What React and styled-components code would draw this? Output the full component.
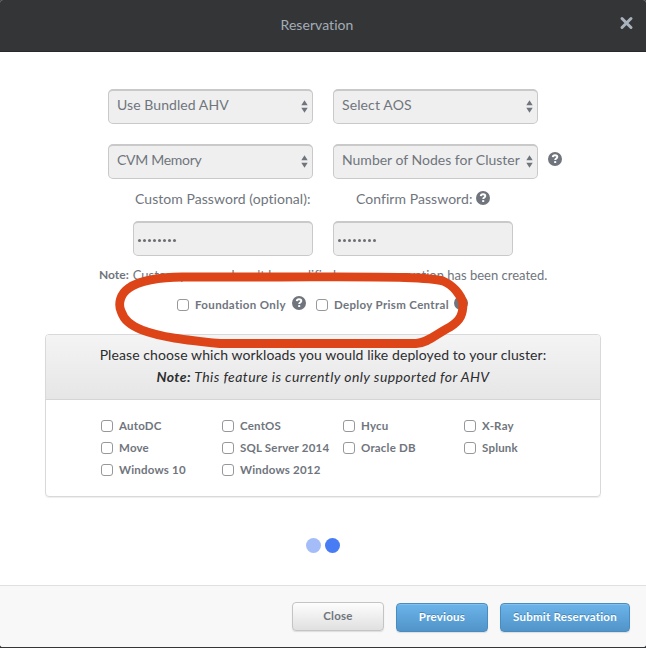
import React from 'react';
import styled, { createGlobalStyle } from 'styled-components';

const GlobalStyle = createGlobalStyle`
  *, *::before, *::after { box-sizing: border-box; }
  html { background: #343537; }
  body {
    margin: 0;
    font-family: Lato, sans-serif;
    font-size: 14px;
    font-variant-ligatures: none;
    color: #70757d;
    background: #343537;
  }
`;

const Modal = styled.div`
  position: relative;
  display: flex;
  flex-direction: column;
  width: 646px;
  height: 647px;
  overflow: hidden;
  background: #fff;
  border-radius: 3px;
`;

const Header = styled.header`
  display: flex;
  align-items: center;
  justify-content: center;
  flex: none;
  height: 52px;
  padding-right: 12px;
  background: #343537;
  border-bottom: 1px solid #28292b;
`;

const Title = styled.h1`
  flex: 1;
  margin: 0;
  padding: 0 0 1px 15px;
  text-align: center;
  font-size: 14px;
  line-height: 18px;
  font-weight: 400;
  letter-spacing: 0.05px;
  color: #a3adb8;
`;

const IconButton = styled.button`
  display: flex;
  margin: 0 0 5px;
  padding: 0;
  border: 0;
  background: none;
  color: #a9b3be;
`;

const Body = styled.main`
  display: flex;
  flex-direction: column;
  flex: 1;
  padding-top: 37px;
`;

const SelectRow = styled.div`
  display: flex;
  gap: 20px;
  height: 35px;
  margin: 0 0 20px 108px;
`;

const HelpSlot = styled.span`
  display: flex;
  margin: 8px 0 0 -10px;
`;

const SelectBox = styled.div`
  display: flex;
  justify-content: space-between;
  width: 205px;
  height: 35px;
  padding: 5px 4px 0 8px;
  border: 1px solid #c9c9c9;
  border-top-width: 2px;
  border-radius: 5px;
  background: #efefef;
  line-height: 17px;
  white-space: nowrap;
  letter-spacing: ${(p) => p.$spacing || '0'};
`;

const Arrows = styled.svg`
  flex: none;
  margin-top: 4px;
`;

const LabelRow = styled.div`
  display: flex;
  height: 22px;
  margin: -12px 0 0 135px;
  line-height: 22px;
`;

const FieldLabel = styled.label`
  display: flex;
  gap: 4px;
  width: ${(p) => p.$width};
  margin-top: 1px;
  white-space: nowrap;
  letter-spacing: 0.05px;

  svg { margin-top: 3px; }
`;

const PasswordRow = styled.div`
  display: flex;
  justify-content: center;
  gap: 20px;
  margin-top: 12px;
`;

const PasswordBox = styled.div`
  display: flex;
  align-items: center;
  gap: 2px;
  width: 180px;
  height: 35px;
  padding: 2px 0 0 4px;
  border: 1px solid #c9c9c9;
  border-top-width: 2px;
  border-radius: 5px;
  background: #efefef;
`;

const Bullet = styled.i`
  width: 3px;
  height: 3px;
  border-radius: 50%;
  background: #6d6d72;
`;

const NoteLine = styled.p`
  display: flex;
  gap: 4px;
  margin: 11px 0 0 99px;
  font-size: 13px;
  line-height: 16px;
  white-space: nowrap;

  b { font-size: 12px; }
`;

const OptionRow = styled.div`
  display: flex;
  align-items: center;
  height: 22px;
  margin: 11px 0 0 177px;
`;

const OptionHelp = styled.span`
  display: flex;
  width: ${(p) => p.$width || '14px'};
  margin-bottom: 4px;
`;

const CheckLabel = styled.label`
  display: flex;
  align-items: center;
  gap: 6px;
  width: ${(p) => p.$width || 'auto'};
  height: 22px;
  font-size: 11.5px;
  font-weight: 700;
  letter-spacing: ${(p) => p.$spacing || '0.2px'};
  white-space: nowrap;
`;

const CheckText = styled.span`
  padding-bottom: 2px;
`;

const CheckBox = styled.input`
  appearance: none;
  flex: none;
  width: 12px;
  height: 12px;
  margin: 0;
  border: 1px solid #96989c;
  border-radius: 3px;
  background: #fff;
`;

const Panel = styled.section`
  width: 556px;
  height: 163px;
  margin: 18px 0 0 45px;
  border: 1px solid #d8d9da;
  border-radius: 4px;
  box-shadow: 0 1px 1px #eee;
  overflow: hidden;
`;

const PanelHeader = styled.div`
  height: 65px;
  padding-top: 9px;
  border-bottom: 1px solid #d4d5d6;
  background: linear-gradient(#f4f4f4, #e6e6e6);
  text-align: center;
  line-height: 22px;
  letter-spacing: 0.09px;
  color: #2c2d2f;
`;

const PanelNote = styled.div`
  font-style: italic;
  letter-spacing: 0.42px;
`;

const Workloads = styled.div`
  display: grid;
  grid-template-columns: repeat(4, 121px);
  grid-auto-rows: 22px;
  padding: 15px 0 0 55px;
`;

const Dots = styled.div`
  display: flex;
  justify-content: center;
  gap: 4px;
  margin-top: 41px;
`;

const Dot = styled.span`
  width: 15px;
  height: 15px;
  border-radius: 50%;
  background: ${(p) => (p.$active ? '#477cf4' : '#a4bdf9')};
`;

const Footer = styled.footer`
  display: flex;
  justify-content: flex-end;
  gap: 12px;
  flex: none;
  height: 62px;
  padding: 17px 16px 0 0;
  border-top: 1px solid #dfe0e1;
  background: #f8f8f8;
`;

const Button = styled.button`
  width: 92px;
  height: 29px;
  padding: 0 0 2px;
  border: 1px solid #c4c4c4;
  border-radius: 4px;
  background: linear-gradient(#fdfdfd, #e0e0e0);
  box-shadow: 0 1px 1px #ddd;
  color: #70757d;
  font: 700 11.5px/25px Lato, sans-serif;
  letter-spacing: 0.25px;
  margin-top: -1px;
`;

const PrimaryButton = styled(Button)`
  width: ${(p) => p.$width || '92px'};
  margin-top: 0;
  border-color: #4b8cc0;
  background: linear-gradient(#6bb4ea, #5194c9);
  box-shadow: inset 0 1px #7fc0ee, 0 1px 1px #ddd;
  color: #fff;
  text-shadow: 0 -1px #4486b9;
`;

const Annotation = styled.svg`
  position: absolute;
  left: 110px;
  top: 265px;
  pointer-events: none;
`;

const SelectArrows = () => (
  <Arrows width="7" height="13" viewBox="0 0 7 13">
    <path d="M0.3 5.2 3.5 0.2 6.7 5.2zM0.3 7.8 3.5 12.8 6.7 7.8z" fill="#70757d" />
  </Arrows>
);

const Help = () => (
  <svg width="14" height="14" viewBox="0 0 14 14">
    <circle cx="7" cy="7" r="7" fill="#70757d" />
    <path
      d="M4.8 5.1C4.9 3.8 5.8 3.2 7 3.2c1.3 0 2.3.7 2.3 1.9C9.3 6.6 7.2 6.6 7.2 8.1"
      fill="none"
      stroke="#fff"
      strokeWidth="1.9"
    />
    <rect x="6.2" y="9.1" width="2" height="1.9" fill="#fff" />
  </svg>
);

const Select = ({ children, spacing }) => (
  <SelectBox $spacing={spacing}>
    {children}
    <SelectArrows />
  </SelectBox>
);

const Password = () => (
  <PasswordBox>
    {Array.from({ length: 8 }, (_, i) => (
      <Bullet key={i} />
    ))}
  </PasswordBox>
);

const Check = ({ children, width, spacing }) => (
  <CheckLabel $width={width} $spacing={spacing}>
    <CheckBox type="checkbox" />
    <CheckText>{children}</CheckText>
  </CheckLabel>
);

const workloads = [
  'AutoDC', 'CentOS', 'Hycu', 'X-Ray',
  'Move', 'SQL Server 2014', 'Oracle DB', 'Splunk',
  'Windows 10', 'Windows 2012',
];

export default function App() {
  return (
    <Modal>
      <GlobalStyle />
      <Header>
        <Title>Reservation</Title>
        <IconButton aria-label="Close dialog">
          <svg width="15" height="14" viewBox="0 0 15 14">
            <path d="M3 2.5 12 11.5M12 2.5 3 11.5" stroke="currentColor" strokeWidth="3" strokeLinecap="round" />
          </svg>
        </IconButton>
      </Header>
      <Body>
        <SelectRow>
          <Select spacing="0.07px">Use Bundled AHV</Select>
          <Select spacing="0.12px">Select AOS</Select>
        </SelectRow>
        <SelectRow>
          <Select spacing="-0.3px">CVM Memory</Select>
          <Select>Number of Nodes for Cluster</Select>
          <HelpSlot><Help /></HelpSlot>
        </SelectRow>
        <LabelRow>
          <FieldLabel $width="221px">Custom Password (optional):</FieldLabel>
          <FieldLabel $width="auto">
            Confirm Password:
            <Help />
          </FieldLabel>
        </LabelRow>
        <PasswordRow>
          <Password />
          <Password />
        </PasswordRow>
        <NoteLine>
          <b>Note:</b>
          <span>Custom password can't be modified once a reservation has been created.</span>
        </NoteLine>
        <OptionRow>
          <Check width="115px" spacing="0.35px">Foundation Only</Check>
          <OptionHelp $width="24px"><Help /></OptionHelp>
          <Check width="138px" spacing="0.34px">Deploy Prism Central</Check>
          <OptionHelp><Help /></OptionHelp>
        </OptionRow>
        <Panel>
          <PanelHeader>
            Please choose which workloads you would like deployed to your cluster:
            <PanelNote><b>Note:</b> This feature is currently only supported for AHV</PanelNote>
          </PanelHeader>
          <Workloads>
            {workloads.map((name) => (
              <Check key={name}>{name}</Check>
            ))}
          </Workloads>
        </Panel>
        <Dots>
          <Dot />
          <Dot $active />
        </Dots>
      </Body>
      <Footer>
        <Button>Close</Button>
        <PrimaryButton>Previous</PrimaryButton>
        <PrimaryButton $width="130px">Submit Reservation</PrimaryButton>
      </Footer>
      <Annotation width="365" height="90" viewBox="110 265 365 90">
        <path
          d="M280 277H182C160 277 138 281 129 288C120 294 118 304 121 311C124 320 130 325 142 330C160 337 185 340 220 343.5H416C428 343 436 334 450 327C461 320 463 314 463 303C461 295 453 285 443 281C436 279 420 278 405 277.5C370 276.5 320 277 280 277Z"
          fill="none"
          stroke="#dd4518"
          strokeWidth="8.8"
          strokeLinejoin="round"
        />
      </Annotation>
    </Modal>
  );
}
